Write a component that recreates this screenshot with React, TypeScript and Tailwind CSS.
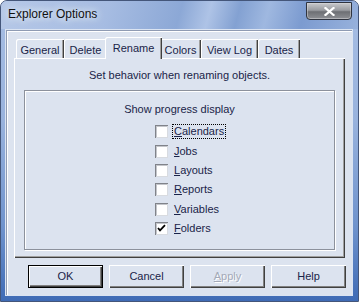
import React from 'react';

const font = "font-['Tahoma','Liberation_Sans',sans-serif]";

const tabs = [
  { label: 'General', w: 'w-[48px]' },
  { label: 'Delete', w: 'w-[43px]' },
  { label: 'Rename', w: 'w-[57px]', active: true },
  { label: 'Colors', w: 'w-[41px]' },
  { label: 'View Log', w: 'w-[57px]' },
  { label: 'Dates', w: 'w-[42px]' },
];

const items = [
  { key: 'C', rest: 'alendars', focus: true },
  { key: 'J', rest: 'obs' },
  { key: 'L', rest: 'ayouts' },
  { key: 'R', rest: 'eports' },
  { key: 'V', rest: 'ariables' },
  { key: 'F', rest: 'olders', checked: true },
];

function Tab({ label, w, active }: { label: string; w: string; active?: boolean }) {
  if (active) {
    return (
      <div
        className={`${w} h-[22px] -mx-[2px] -mb-[1px] relative z-10 bg-[#dce3ef] rounded-tl-[2px] pt-[3px] text-center shadow-[inset_1px_1px_#fff,inset_-1px_0_#404040,inset_-2px_0_#a0a0a0]`}
      >
        {label}
      </div>
    );
  }
  return (
    <div
      className={`${w} h-[19px] bg-[#dce3ef] rounded-tl-[2px] pt-[3px] text-center shadow-[inset_1px_1px_#fff,inset_-1px_0_#404040,inset_-2px_0_#a0a0a0]`}
    >
      {label}
    </div>
  );
}

function CheckRow({ k, rest, focus, checked }: { k: string; rest: string; focus?: boolean; checked?: boolean }) {
  return (
    <div className="h-[19.4px] flex items-center">
      <div className="w-[13px] h-[13px] bg-white shadow-[inset_1px_1px_#80838a,inset_-1px_-1px_#d8dbe0,inset_2px_2px_#c4c6cb] flex items-center justify-center">
        {checked && (
          <svg width="9" height="9" viewBox="0 0 9 9">
            <path d="M1 4 L3 6.3 L8 1.2" stroke="#000" strokeWidth="1.8" fill="none" />
          </svg>
        )}
      </div>
      <span
        className={`ml-[4px] px-[1px] leading-[13px] border ${focus ? 'border-dotted border-black' : 'border-transparent'}`}
      >
        <span className="underline underline-offset-[1px]">{k}</span>
        {rest}
      </span>
    </div>
  );
}

function Button({ children, def, disabled }: { children: React.ReactNode; def?: boolean; disabled?: boolean }) {
  return (
    <div
      className={`w-[75px] h-[23px] flex items-center justify-center bg-[#dce3ef] ${
        def
          ? 'shadow-[inset_0_0_0_1px_#000,inset_2px_2px_#fff,inset_-2px_-2px_#404040,inset_-3px_-3px_#808080]'
          : 'shadow-[inset_1px_1px_#fff,inset_-1px_-1px_#404040,inset_-2px_-2px_#808080]'
      } ${disabled ? 'text-[#a3a9b8] [text-shadow:1px_1px_0_#fff]' : ''}`}
    >
      {children}
    </div>
  );
}

export default function App() {
  return (
    <div
      className={`${font} w-[359px] h-[302px] flex flex-col rounded-t-[7px] border border-[#44567a] bg-[linear-gradient(180deg,#a7bee4_0%,#98b2dd_40%,#6f93cd_75%,#3f6bb5_100%)] text-[11px] text-[#1a2348] overflow-hidden`}
    >
      {/* title bar */}
      <div className="h-[28px] shrink-0 flex items-start justify-between bg-[linear-gradient(105deg,#b6c8e7_0%,#a6bce2_30%,#8ca8d6_50%,#aec3e6_58%,#83a1d2_66%,#9fb8e0_74%,#7c9bd0_84%,#97b1dc_100%)]">
        <div className="pl-[7px] pt-[6px] text-[12px] leading-[15px] text-[#111] [text-shadow:0_0_6px_#e8f0fb,0_0_10px_#e8f0fb] font-['Segoe_UI','Liberation_Sans',sans-serif]">
          Explorer Options
        </div>
        <div className="mr-[6px] mt-[1px] w-[46px] h-[18px] rounded-b-[4px] border border-[#2f3440] bg-[linear-gradient(180deg,#c8c9cc_0%,#9a9ca1_45%,#6d6f74_55%,#8e9095_100%)] shadow-[inset_0_0_0_1px_#d9dadd80] flex items-center justify-center">
          <svg width="11" height="9" viewBox="0 0 11 9">
            <path d="M1.5 1 L9.5 8 M9.5 1 L1.5 8" stroke="#fff" strokeWidth="2.2" strokeLinecap="square" />
          </svg>
        </div>
      </div>

      {/* client area */}
      <div className="ml-[5px] mr-[6px] mt-[1px] h-[265px] flex flex-col bg-[#dce3ef] border-l border-t border-[#8f9bb3] border-r-[#2e3a52] border-b-[#2e3a52] shadow-[0_0_0_1px_#dbe4f2,inset_1px_1px_#fff]">
        <div className="pt-[6px] px-[7px]">
          <div className="h-[21px] flex items-end pl-[2px]">
            {tabs.map((t) => (
              <Tab key={t.label} {...t} />
            ))}
          </div>
          <div className="h-[200px] flex flex-col px-[10px] pt-[11px] shadow-[inset_1px_1px_#fff,inset_-1px_-1px_#404040,inset_-2px_-2px_#a0a0a0]">
            <div className="text-center leading-[13px]">Set behavior when renaming objects.</div>
            <div className="mt-[8px] h-[160px] border border-[#8c919c] shadow-[1px_1px_0_#fff,inset_1px_1px_0_#fff] pt-[12px]">
              <div className="text-center leading-[13px]">Show progress display</div>
              <div className="mt-[6px] pl-[130px] flex flex-col">
                {items.map((i) => (
                  <CheckRow key={i.key} k={i.key} rest={i.rest} focus={i.focus} checked={i.checked} />
                ))}
              </div>
            </div>
          </div>
        </div>
        <div className="mt-[7px] flex justify-end gap-[6px] pr-[6px]">
          <Button def>OK</Button>
          <Button>Cancel</Button>
          <Button disabled>
            <span>
              <span className="underline underline-offset-[1px]">A</span>pply
            </span>
          </Button>
          <Button>Help</Button>
        </div>
      </div>
    </div>
  );
}
